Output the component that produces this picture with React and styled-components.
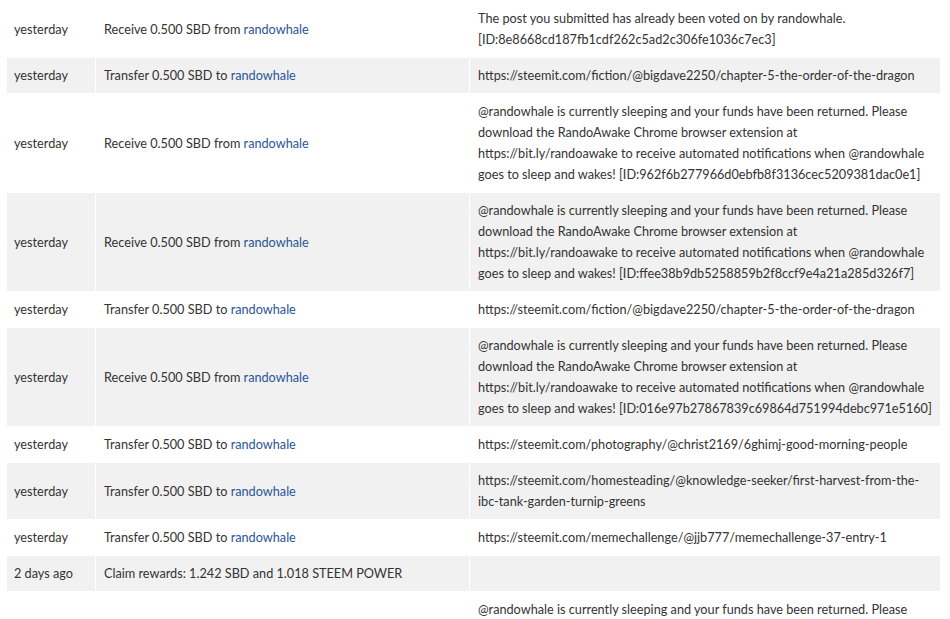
import React from "react";
import styled, { createGlobalStyle } from "styled-components";

const GlobalStyle = createGlobalStyle`
  html, body {
    margin: 0;
    padding: 0;
    background: #fff;
  }
  body {
    font-family: "Source Sans Pro", Lato, "Liberation Sans", sans-serif;
    font-size: 12.7px;
    color: #333;
  }
`;

const Table = styled.table`
  table-layout: fixed;
  width: 935px;
  margin: 0 0 0 6px;
  border-collapse: separate;
  border-spacing: 1px;
`;

const Row = styled.tr`
  background: ${props => (props.$shaded ? "#f1f1f1" : "#fff")};
`;

const Cell = styled.td`
  padding: 7px 8px 7px ${props => props.$first ? "7px" : "8px"};
  line-height: 21px;
  vertical-align: middle;
  color: #333;
`;

const Line = styled.span`
  display: block;
  white-space: nowrap;
`;

const UserLink = styled.a`
  color: #2a5599;
  text-decoration: none;
`;

const sleeping = id => [
  "@randowhale is currently sleeping and your funds have been returned. Please",
  "download the RandoAwake Chrome browser extension at",
  "https://bit.ly/randoawake to receive automated notifications when @randowhale",
  "goes to sleep and wakes! [ID:" + id + "]"
];

const history = [
  {
    when: "yesterday", kind: "receive", amount: "0.500 SBD", who: "randowhale",
    memo: [
      "The post you submitted has already been voted on by randowhale.",
      "[ID:8e8668cd187fb1cdf262c5ad2c306fe1036c7ec3]"
    ]
  },
  {
    when: "yesterday", kind: "transfer", amount: "0.500 SBD", who: "randowhale",
    memo: ["https://steemit.com/fiction/@bigdave2250/chapter-5-the-order-of-the-dragon"]
  },
  {
    when: "yesterday", kind: "receive", amount: "0.500 SBD", who: "randowhale",
    memo: sleeping("962f6b277966d0ebfb8f3136cec5209381dac0e1")
  },
  {
    when: "yesterday", kind: "receive", amount: "0.500 SBD", who: "randowhale",
    memo: sleeping("ffee38b9db5258859b2f8ccf9e4a21a285d326f7")
  },
  {
    when: "yesterday", kind: "transfer", amount: "0.500 SBD", who: "randowhale",
    memo: ["https://steemit.com/fiction/@bigdave2250/chapter-5-the-order-of-the-dragon"]
  },
  {
    when: "yesterday", kind: "receive", amount: "0.500 SBD", who: "randowhale",
    memo: sleeping("016e97b27867839c69864d751994debc971e5160")
  },
  {
    when: "yesterday", kind: "transfer", amount: "0.500 SBD", who: "randowhale",
    memo: ["https://steemit.com/photography/@christ2169/6ghimj-good-morning-people"]
  },
  {
    when: "yesterday", kind: "transfer", amount: "0.500 SBD", who: "randowhale",
    memo: [
      "https://steemit.com/homesteading/@knowledge-seeker/first-harvest-from-the-",
      "ibc-tank-garden-turnip-greens"
    ]
  },
  {
    when: "yesterday", kind: "transfer", amount: "0.500 SBD", who: "randowhale",
    memo: ["https://steemit.com/memechallenge/@jjb777/memechallenge-37-entry-1"]
  },
  {
    when: "2 days ago", kind: "claim", text: "Claim rewards: 1.242 SBD and 1.018 STEEM POWER",
    memo: []
  },
  {
    when: "2 days ago", kind: "receive", amount: "0.500 SBD", who: "randowhale",
    memo: sleeping("5c1d1e0a8b7f3e2d9c6a4b1f0e8d7c6b5a4f3e2d")
  }
];

function Description({ item }) {
  if (item.kind === "claim") return item.text;
  if (item.kind === "receive") {
    return <>Receive {item.amount} from <UserLink href="#">{item.who}</UserLink></>;
  }
  return <>Transfer {item.amount} to <UserLink href="#">{item.who}</UserLink></>;
}

export default function App() {
  return (
    <>
      <GlobalStyle />
      <Table>
        <colgroup>
          <col style={{ width: 88 }} />
          <col style={{ width: 373 }} />
          <col style={{ width: 470 }} />
        </colgroup>
        <tbody>
          {history.map((item, i) => (
            <Row key={i} $shaded={i % 2 === 1}>
              <Cell $first>{item.when}</Cell>
              <Cell><Description item={item} /></Cell>
              <Cell>
                {item.memo.map((line, j) => <Line key={j}>{line}</Line>)}
              </Cell>
            </Row>
          ))}
        </tbody>
      </Table>
    </>
  );
}
